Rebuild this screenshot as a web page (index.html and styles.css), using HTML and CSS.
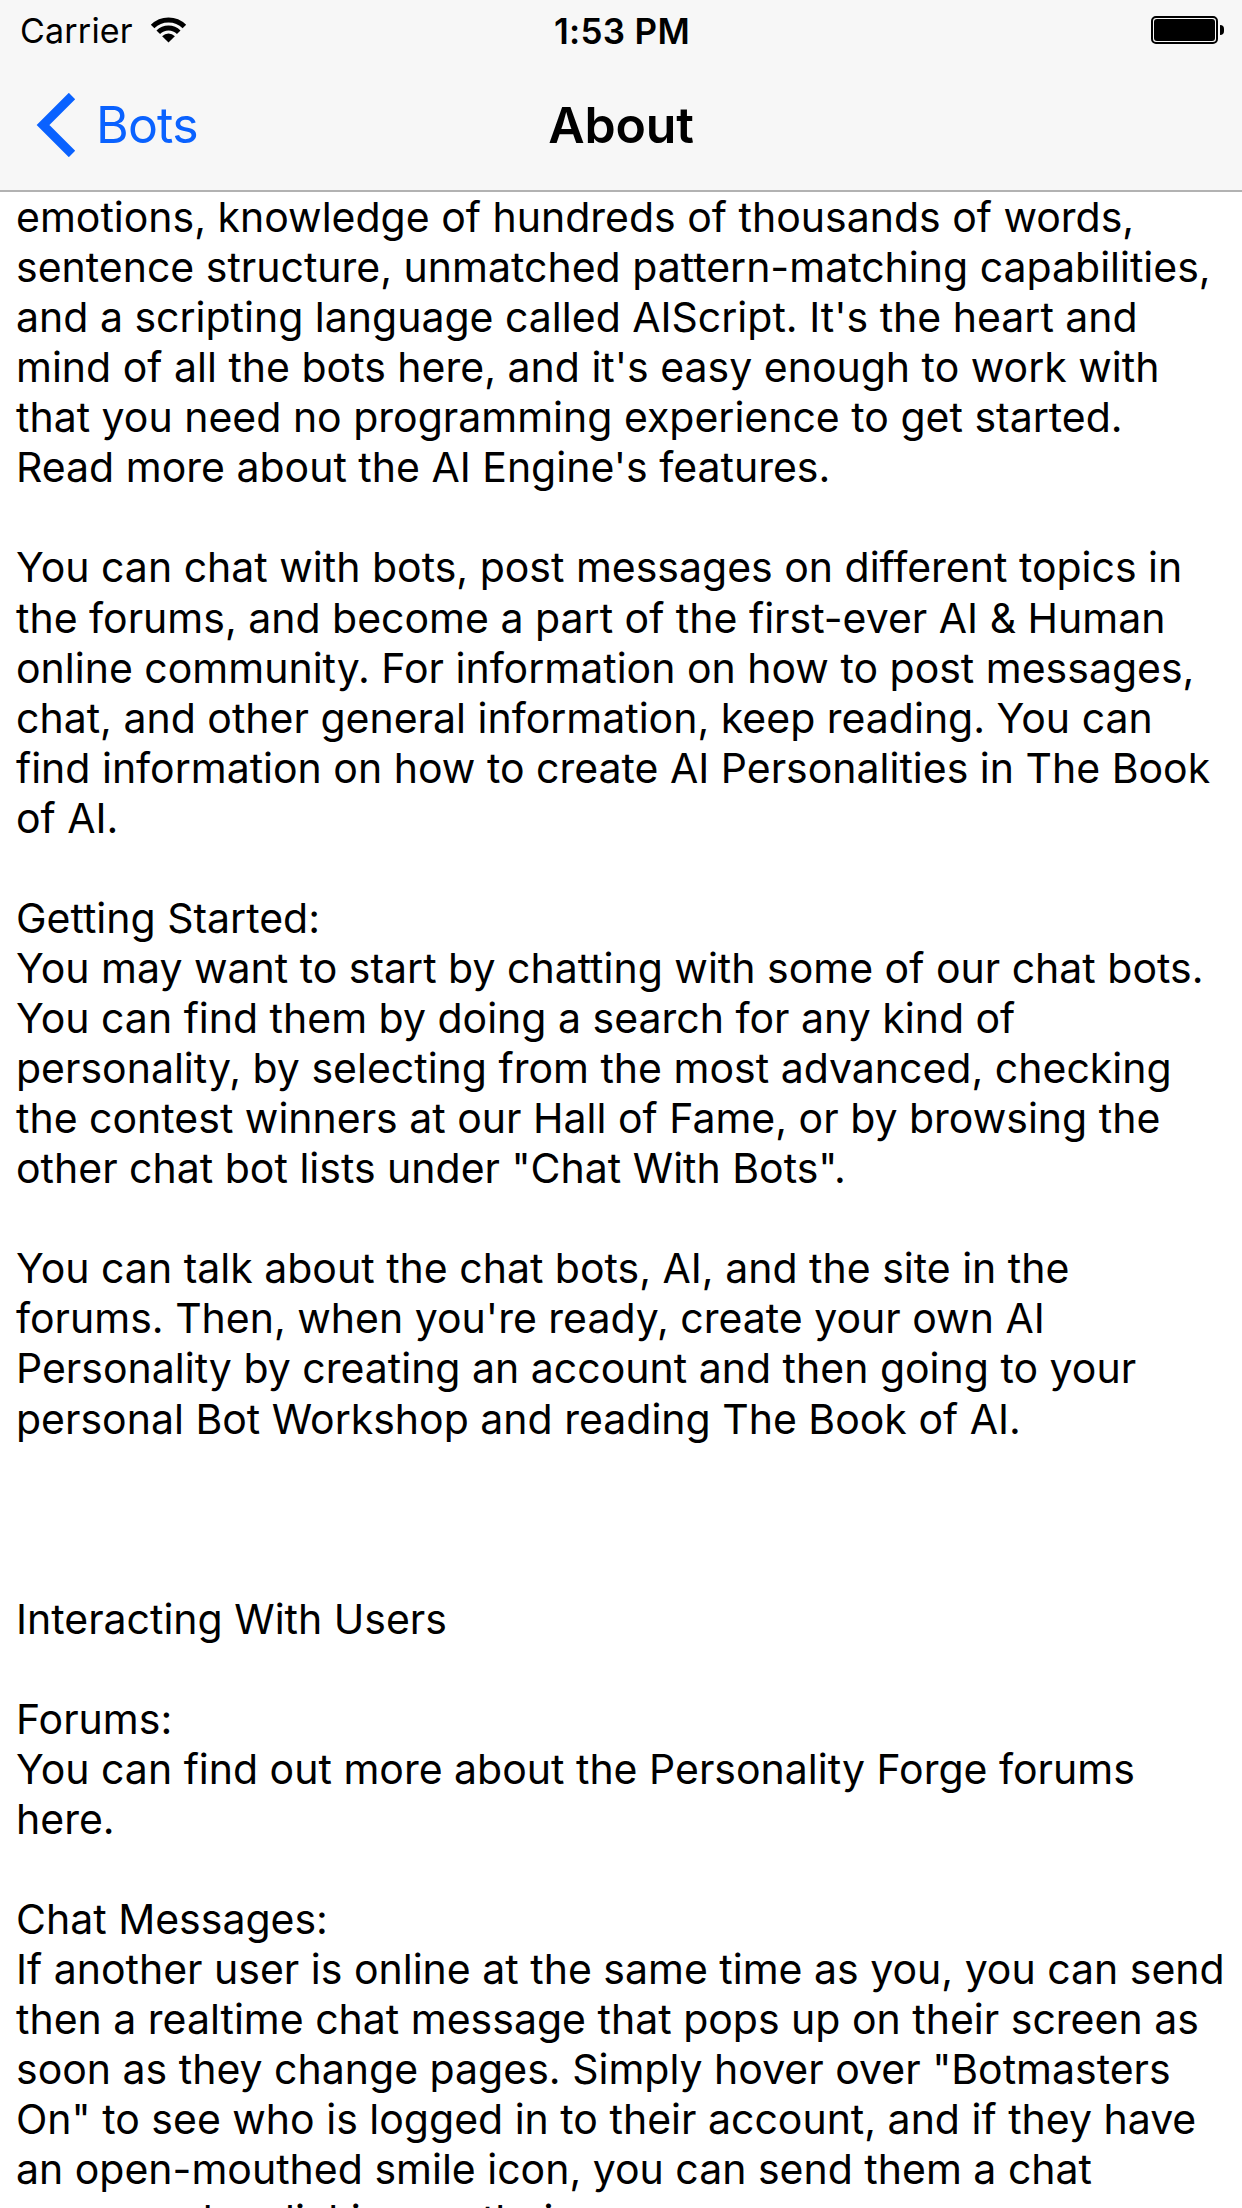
FILE: index.html
```html
<!DOCTYPE html>
<html lang="en">
<head>
<meta charset="utf-8">
<title>About</title>
<link rel="stylesheet" href="styles.css">
</head>
<body>
<div class="screen">
  <header class="topbar">
    <div class="status">
      <div class="status-left">
        <span class="carrier">Carrier</span>
        <svg class="wifi" width="38" height="28" viewBox="0 0 38 28" aria-hidden="true">
          <path d="M2.6 11.6 A22.5 22.5 0 0 1 34.4 11.6" fill="none" stroke="#000" stroke-width="5"/>
          <path d="M8.25 17.25 A14.5 14.5 0 0 1 28.75 17.25" fill="none" stroke="#000" stroke-width="5"/>
          <path d="M18.5 27.5 L12.14 21.14 A9 9 0 0 1 24.86 21.14 Z" fill="#000"/>
        </svg>
      </div>
      <div class="time">1:53 PM</div>
      <div class="status-right">
        <span class="battery"><span class="battery-fill"></span></span>
        <span class="battery-nub"></span>
      </div>
    </div>
    <nav class="navbar">
      <a class="back" href="#">
        <svg class="chevron" width="40" height="64" viewBox="0 0 40 64" aria-hidden="true">
          <polyline points="36,3 7,32 36,61" fill="none" stroke="#0a62ff" stroke-width="9" stroke-linecap="butt" stroke-linejoin="miter"/>
        </svg>
        <span class="back-label">Bots</span>
      </a>
      <h1 class="title">About</h1>
      <span class="nav-spacer"></span>
    </nav>
  </header>
  <main class="content">
    <p>emotions, knowledge of hundreds of thousands of words,<br>sentence structure, unmatched pattern-matching capabilities,<br>and a scripting language called AIScript. It's the heart and<br>mind of all the bots here, and it's easy enough to work with<br>that you need no programming experience to get started.<br>Read more about the AI Engine's features.</p>
    <p>You can chat with bots, post messages on different topics in<br>the forums, and become a part of the first-ever AI &amp; Human<br>online community. For information on how to post messages,<br>chat, and other general information, keep reading. You can<br>find information on how to create AI Personalities in The Book<br>of AI.</p>
    <p>Getting Started:<br>You may want to start by chatting with some of our chat bots.<br>You can find them by doing a search for any kind of<br>personality, by selecting from the most advanced, checking<br>the contest winners at our Hall of Fame, or by browsing the<br>other chat bot lists under "Chat With Bots".</p>
    <p class="section-end">You can talk about the chat bots, AI, and the site in the<br>forums. Then, when you're ready, create your own AI<br>Personality by creating an account and then going to your<br>personal Bot Workshop and reading The Book of AI.</p>
    <p>Interacting With Users</p>
    <p>Forums:<br>You can find out more about the Personality Forge forums<br>here.</p>
    <p>Chat Messages:<br>If another user is online at the same time as you, you can send<br>then a realtime chat message that pops up on their screen as<br>soon as they change pages. Simply hover over "Botmasters<br>On" to see who is logged in to their account, and if they have<br>an open-mouthed smile icon, you can send them a chat<br>message by clicking on their name.</p>
  </main>
</div>
</body>
</html>
```
FILE: styles.css
```css
* { box-sizing: border-box; }

html, body {
  margin: 0;
  padding: 0;
  background: #ffffff;
}

.screen {
  width: 1242px;
  height: 2208px;
  overflow: hidden;
  font-family: "Inter", "Roboto", "Liberation Sans", sans-serif;
  color: #000;
  background: #fff;
}

.topbar {
  background: #f7f7f7;
  border-bottom: 2px solid #b2b2b2;
}

.status {
  height: 60px;
  display: grid;
  grid-template-columns: 1fr auto 1fr;
  align-items: center;
  padding: 2px 18px 0 20px;
}

.status-left {
  display: flex;
  align-items: center;
  gap: 17px;
}

.carrier {
  font-size: 34px;
  line-height: 1;
  letter-spacing: 0.2px;
}

.wifi {
  display: block;
  margin-top: -4px;
}

.time {
  font-size: 35px;
  font-weight: 600;
  line-height: 1;
  letter-spacing: 0.3px;
}

.status-right {
  display: flex;
  align-items: center;
  justify-content: flex-end;
}

.battery {
  width: 67px;
  height: 28px;
  border: 2px solid #000;
  border-radius: 5px;
  padding: 1px;
  display: flex;
  margin-top: -2px;
}

.battery-fill {
  flex: 1;
  background: #000;
  border-radius: 3px;
}

.battery-nub {
  width: 4px;
  height: 10px;
  background: #000;
  border-radius: 0 4px 4px 0;
  margin-left: 2px;
  margin-top: -2px;
}

.navbar {
  height: 130px;
  display: grid;
  grid-template-columns: 1fr auto 1fr;
  align-items: center;
}

.back {
  display: flex;
  align-items: center;
  gap: 20px;
  padding-left: 36px;
  text-decoration: none;
  color: #0a62ff;
}

.chevron {
  display: block;
}

.back-label {
  font-size: 50px;
  line-height: 1;
  letter-spacing: -0.8px;
}

.title {
  margin: 0;
  font-size: 50px;
  font-weight: 600;
  line-height: 1;
  letter-spacing: -0.2px;
}

.content {
  padding: 0 0 0 16px;
  font-size: 41px;
  line-height: 50.07px;
  white-space: nowrap;
}

.content p {
  margin: 0 0 50.07px 0;
}

.content p.section-end {
  margin-bottom: 150.21px;
}
```
